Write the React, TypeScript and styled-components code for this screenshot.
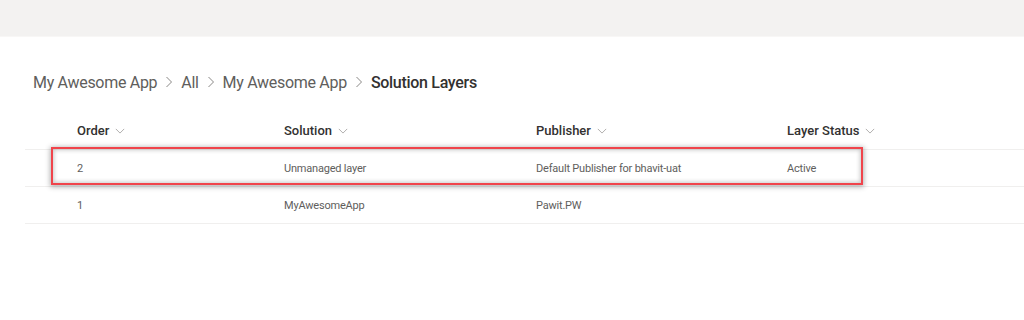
import React from 'react'
import styled, { createGlobalStyle } from 'styled-components'

const GlobalStyle = createGlobalStyle`
  body {
    margin: 0;
    background: #ffffff;
    font-family: Roboto, "Open Sans", Arial, sans-serif;
  }
`

const TopBar = styled.div`
  height: 36px;
  background: #f3f2f1;
  border-bottom: 1px solid #f8f7f6;
`

const Page = styled.div`
  padding-top: 30px;
`

const Breadcrumb = styled.nav`
  display: flex;
  align-items: center;
  height: 30px;
  padding-left: 33px;
  font-size: 16px;
  letter-spacing: -0.3px;
  color: #605e5c;
`

const Crumb = styled.span<{ $current?: boolean }>`
  color: ${(p) => (p.$current ? '#323130' : '#605e5c')};
  font-weight: ${(p) => (p.$current ? 500 : 400)};
  white-space: nowrap;
`

const Separator = styled.span`
  display: inline-flex;
  align-items: center;
  margin: 0 8px;
  color: #8a8886;
`

const TableWrap = styled.div`
  position: relative;
  margin-top: 15px;
  margin-left: 25px;
`

const Row = styled.div<{ $header?: boolean }>`
  display: grid;
  grid-template-columns: 52px 207px 252px 251px 1fr;
  align-items: center;
  height: ${(p) => (p.$header ? '37px' : '36px')};
  border-bottom: 1px solid #f0efee;
  font-size: ${(p) => (p.$header ? '13px' : '11px')};
  letter-spacing: ${(p) => (p.$header ? '0' : '-0.2px')};
  font-weight: ${(p) => (p.$header ? 500 : 400)};
  color: ${(p) => (p.$header ? '#323130' : '#605e5c')};
`

const Cell = styled.div`
  display: flex;
  align-items: center;
  gap: 6px;
  white-space: nowrap;
`

const Highlight = styled.div`
  position: absolute;
  left: 26px;
  top: 35px;
  width: 812px;
  height: 38px;
  box-sizing: border-box;
  border: 2.5px solid #f0444b;
  box-shadow: 0 1px 5px 1px rgba(0, 0, 0, 0.3), inset 0 0 4px 1px rgba(0, 0, 0, 0.22);
  pointer-events: none;
`

const Chevron = ({ size = 10, color = '#a19f9d' }: { size?: number; color?: string }) => (
  <svg width={size} height={size} viewBox="0 0 12 12" fill="none">
    <path d="M1 3.5 L6 8.5 L11 3.5" stroke={color} strokeWidth="1" />
  </svg>
)

const RightChevron = () => (
  <svg width="8" height="12" viewBox="0 0 8 12" fill="none">
    <path d="M1.5 1 L6.5 6 L1.5 11" stroke="#8a8886" strokeWidth="1" />
  </svg>
)

const columns = ['Order', 'Solution', 'Publisher', 'Layer Status']

const rows = [
  ['2', 'Unmanaged layer', 'Default Publisher for bhavit-uat', 'Active'],
  ['1', 'MyAwesomeApp', 'Pawit.PW', ''],
]

const crumbs = ['My Awesome App', 'All', 'My Awesome App']

export default function App() {
  return (
    <>
      <GlobalStyle />
      <TopBar />
      <Page>
        <Breadcrumb>
          {crumbs.map((c, i) => (
            <React.Fragment key={i}>
              <Crumb>{c}</Crumb>
              <Separator>
                <RightChevron />
              </Separator>
            </React.Fragment>
          ))}
          <Crumb $current>Solution Layers</Crumb>
        </Breadcrumb>
        <TableWrap>
          <Row $header>
            <Cell />
            {columns.map((c) => (
              <Cell key={c}>
                {c}
                <Chevron />
              </Cell>
            ))}
          </Row>
          {rows.map((r, i) => (
            <Row key={i}>
              <Cell />
              {r.map((v, j) => (
                <Cell key={j}>{v}</Cell>
              ))}
            </Row>
          ))}
          <Highlight />
        </TableWrap>
      </Page>
    </>
  )
}
